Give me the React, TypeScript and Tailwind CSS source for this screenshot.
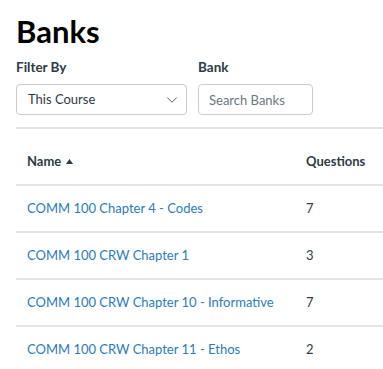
import { ChevronDown } from 'lucide-react'

const banks = [
  { name: 'COMM 100 Chapter 4 - Codes', questions: 7 },
  { name: 'COMM 100 CRW Chapter 1', questions: 3 },
  { name: 'COMM 100 CRW Chapter 10 - Informative', questions: 7 },
  { name: 'COMM 100 CRW Chapter 11 - Ethos', questions: 2 },
]

export default function App (): JSX.Element {
  return (
    <section className="w-[383px] h-[369px] overflow-hidden bg-white pl-4 text-[#2d3b45] font-['Lato','Noto_Sans',sans-serif]">
      <h1 className="pt-[13px] text-[31px] leading-[36px] font-bold text-black">Banks</h1>

      <div className="flex gap-[11px] mt-[9px]">
        <div className="flex flex-col">
          <label className="text-[13.5px] leading-[18px] font-bold">Filter By</label>
          <div className="mt-[8px] w-[171px] h-[31px] border border-[#c7cdd1] rounded-[4px] flex items-center justify-between pl-[11px] pr-[5px]">
            <span className="text-[13px]">This Course</span>
            <ChevronDown size={18} strokeWidth={1.1} className="text-[#2d3b45]" />
          </div>
        </div>
        <div className="flex flex-col">
          <label className="text-[13.5px] leading-[18px] font-bold">Bank</label>
          <input
            placeholder="Search Banks"
            className="mt-[8px] w-[115px] h-[31px] border border-[#c7cdd1] rounded-[4px] px-[10px] text-[13px] placeholder:text-[#6b7780] outline-none"
          />
        </div>
      </div>

      <table className="mt-[12px] w-[420px] border-collapse text-[13px]">
        <thead>
          <tr className="border-t-2 border-b-2 border-[#e3e6e8]">
            <th className="h-[57px] pt-[10px] pl-[11px] text-left font-bold">
              <span className="inline-flex items-center gap-[5px]">
                Name
                <svg width="7" height="5" viewBox="0 0 7 5"><path d="M0 5 L3.5 0 L7 5 Z" fill="#2d3b45" /></svg>
              </span>
            </th>
            <th className="h-[57px] pt-[10px] w-[130px] text-left font-bold">Questions</th>
          </tr>
        </thead>
        <tbody>
          {banks.map(b => (
            <tr key={b.name} className="border-b-2 border-[#e3e6e8]">
              <td className="h-[47px] pl-[11px]">
                <a href="#" className="text-[#2b7bbd]">{b.name}</a>
              </td>
              <td className="h-[47px]">{b.questions}</td>
            </tr>
          ))}
        </tbody>
      </table>
    </section>
  )
}
